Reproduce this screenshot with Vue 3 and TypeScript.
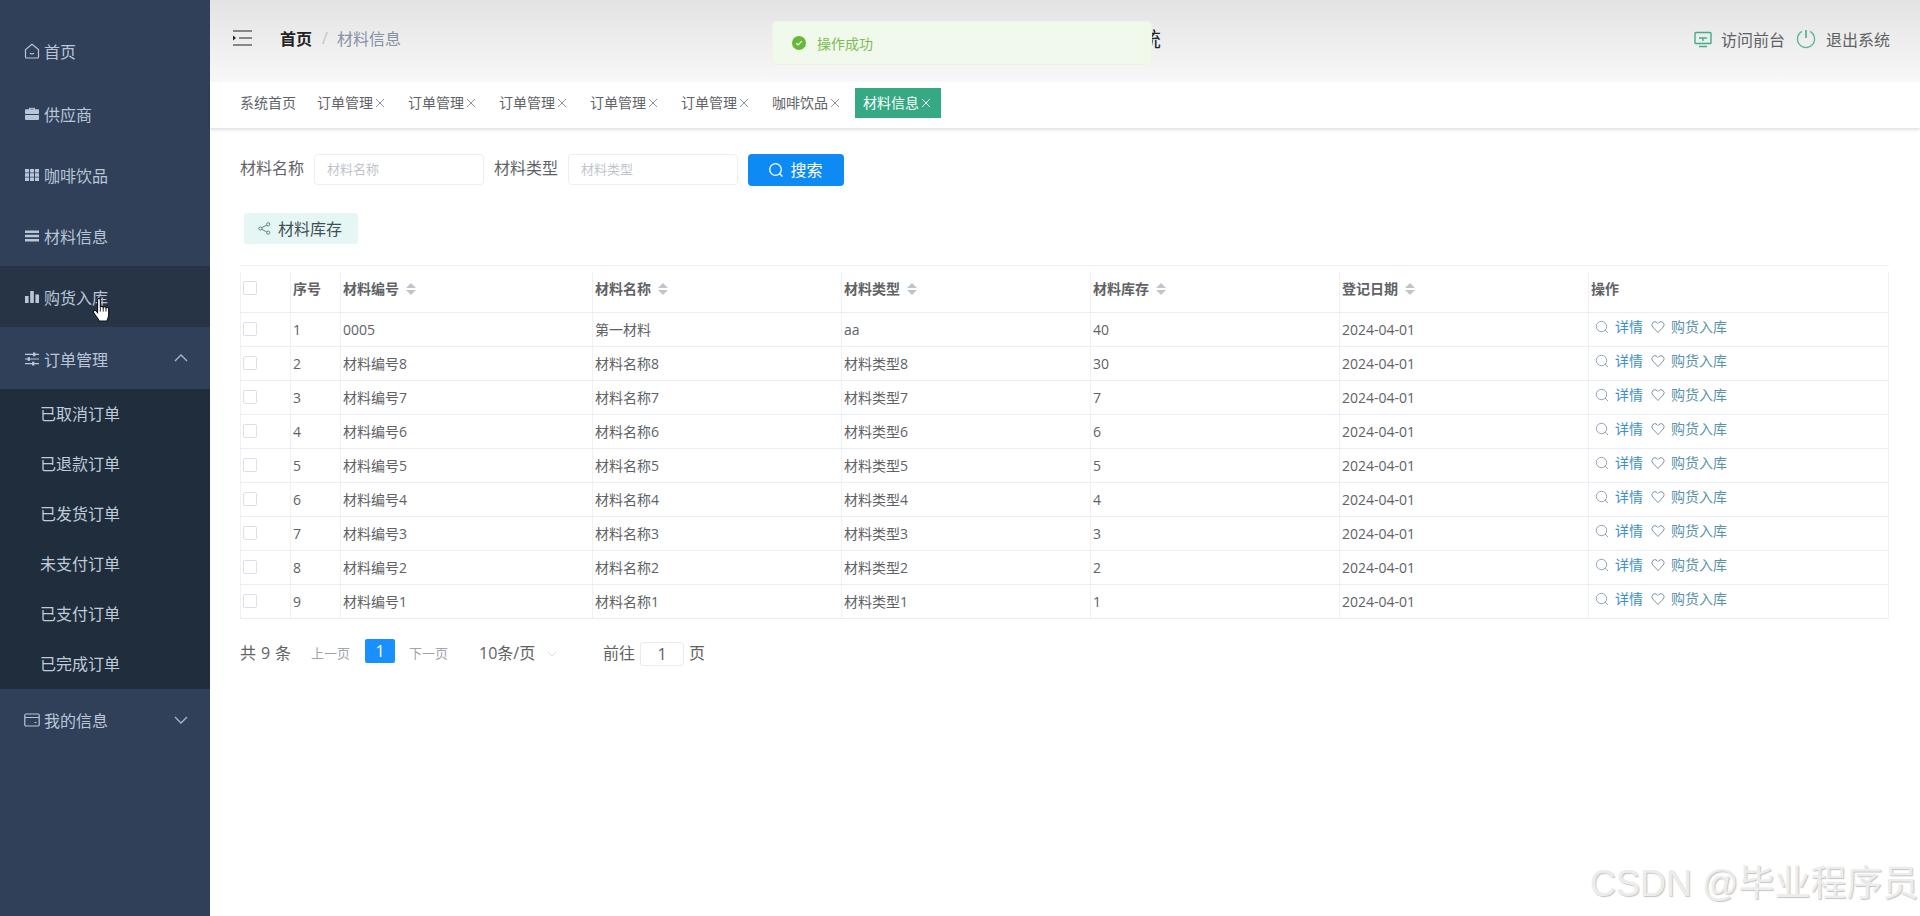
<script setup lang="ts">
interface MenuItem { label: string; icon: string; hover?: boolean; open?: boolean; closed?: boolean }
const menu: MenuItem[] = [
  { label: '首页', icon: 'home' },
  { label: '供应商', icon: 'case' },
  { label: '咖啡饮品', icon: 'grid' },
  { label: '材料信息', icon: 'bars' },
  { label: '购货入库', icon: 'chart', hover: true },
  { label: '订单管理', icon: 'sliders', open: true },
]
const subMenu = ['已取消订单', '已退款订单', '已发货订单', '未支付订单', '已支付订单', '已完成订单']
const tags = ['订单管理', '订单管理', '订单管理', '订单管理', '订单管理', '咖啡饮品']
const columns = ['材料编号', '材料名称', '材料类型', '材料库存', '登记日期']
const rows = [
  ['1', '0005', '第一材料', 'aa', '40'],
  ['2', '材料编号8', '材料名称8', '材料类型8', '30'],
  ['3', '材料编号7', '材料名称7', '材料类型7', '7'],
  ['4', '材料编号6', '材料名称6', '材料类型6', '6'],
  ['5', '材料编号5', '材料名称5', '材料类型5', '5'],
  ['6', '材料编号4', '材料名称4', '材料类型4', '4'],
  ['7', '材料编号3', '材料名称3', '材料类型3', '3'],
  ['8', '材料编号2', '材料名称2', '材料类型2', '2'],
  ['9', '材料编号1', '材料名称1', '材料类型1', '1'],
]
</script>

<template>
  <div class="shell">
    <aside class="side">
      <nav class="menu">
        <div v-for="m in menu" :key="m.label" class="item" :class="{ hover: m.hover, open: m.open }">
          <svg class="mi" viewBox="0 0 16 16">
            <g v-if="m.icon === 'home'" fill="none" stroke="currentColor" stroke-width="1.2">
              <path d="M1.5 6.6 8 1.2l6.5 5.4v7.4a1 1 0 0 1-1 1h-11a1 1 0 0 1-1-1z" />
              <path d="M6 10.2q2 1.4 4 0" />
            </g>
            <g v-else-if="m.icon === 'case'" fill="currentColor">
              <path d="M5 3.2V1.800h6v1.400h3a1 1 0 0 1 1 1V8H1V4.200a1 1 0 0 1 1-1zm1.200 0h3.600v-.5H6.200z" fill-rule="evenodd" />
              <path d="M1 9h14v4a1 1 0 0 1-1 1H2a1 1 0 0 1-1-1z" />
            </g>
            <g v-else-if="m.icon === 'grid'" fill="currentColor">
              <path d="M1 2h4v3.400H1zM6 2h4v3.400H6zM11 2h4v3.400h-4zM1 6.300h4v3.400H1zM6 6.300h4v3.400H6zM11 6.300h4v3.400h-4zM1 10.600h4V14H1zM6 10.600h4V14H6zM11 10.600h4V14h-4z" />
            </g>
            <g v-else-if="m.icon === 'bars'" fill="currentColor">
              <path d="M1 2.500h14v2.600H1zM1 6.700h14v2.600H1zM1 10.900h14v2.600H1z" />
            </g>
            <g v-else-if="m.icon === 'chart'" fill="currentColor">
              <path d="M1 7h3.600v7H1zM6.200 2h3.600v12H6.200zM11.400 5.500H15V14h-3.600z" />
            </g>
            <g v-else fill="currentColor">
              <path d="M1 2.800h14v1.200H1zM1 7.400h14v1.200H1zM1 12h14v1.200H1z" />
              <path d="M9 1.600h2.400v3.600H9zM3.600 6.200H6v3.600H3.600zM8 10.800h2.400v3.600H8z" />
            </g>
          </svg>
          <span>{{ m.label }}</span>
          <svg v-if="m.open" class="arrow" viewBox="0 0 14 8"><path d="M1 7l6-6 6 6" /></svg>
        </div>
        <div class="sub">
          <div v-for="s in subMenu" :key="s" class="sub-item">{{ s }}</div>
        </div>
        <div class="item">
          <svg class="mi" viewBox="0 0 16 16" fill="none" stroke="currentColor" stroke-width="1.2">
            <rect x="0.800" y="2" width="14.400" height="12" rx="1.200" />
            <path d="M1 5.500h14M10.500 10.500h2" />
          </svg>
          <span>我的信息</span>
          <svg class="arrow" viewBox="0 0 14 8"><path d="M1 1l6 6 6-6" /></svg>
        </div>
      </nav>
    </aside>

    <div class="main">
      <header class="head">
        <svg class="fold" viewBox="0 0 20 16">
          <path d="M1 1h19M7 8h13M1 15h19" stroke="#222" stroke-width="1.200" fill="none" />
          <path d="M1 5.500 4 8l-3 2.500z" fill="#222" />
        </svg>
        <span class="crumb-a">首页</span>
        <span class="crumb-s">/</span>
        <span class="crumb-b">材料信息</span>
        <span class="title">咖啡管理系统</span>
        <div class="head-right">
          <svg class="hi" viewBox="0 0 18 18" fill="none" stroke="#3fae8c" stroke-width="1.400">
            <rect x="1" y="1.500" width="16" height="11" rx="0.800" />
            <path d="M5 7h8M9 7v3M5 15.500h8" />
          </svg>
          <span class="link">访问前台</span>
          <svg class="hi pw" viewBox="0 0 20 20" fill="none" stroke="#5fb79b" stroke-width="1.300">
            <path d="M6 2.400a8.600 8.600 0 1 0 8 0" />
            <path d="M10 1v8" stroke-width="1.600" stroke="#3fae8c" />
          </svg>
          <span class="link">退出系统</span>
        </div>
      </header>

      <div class="tags">
        <span class="tag">系统首页</span>
        <span v-for="(t, i) in tags" :key="i" class="tag">{{ t }}<svg class="x" viewBox="0 0 12 12"><path d="M2 2l8 8M10 2l-8 8" /></svg></span>
        <span class="tag on">材料信息<svg class="x" viewBox="0 0 12 12"><path d="M2 2l8 8M10 2l-8 8" /></svg></span>
      </div>

      <section class="content">
        <div class="search">
          <label>材料名称</label>
          <div class="inp">材料名称</div>
          <label>材料类型</label>
          <div class="inp">材料类型</div>
          <button class="btn" type="button">
            <svg viewBox="0 0 16 16" fill="none" stroke="#fff" stroke-width="1.300">
              <circle cx="7.500" cy="7.500" r="5.800" /><path d="M11.700 11.700 14.500 14.500" />
            </svg>
            <span>搜索</span>
          </button>
        </div>

        <button class="stock" type="button">
          <svg viewBox="0 0 14 14" fill="none" stroke="#4f7f80" stroke-width="1">
            <circle cx="2.500" cy="7" r="1.700" /><circle cx="11" cy="2.500" r="1.700" /><circle cx="11" cy="11.500" r="1.700" />
            <path d="M4 6.200 9.500 3.300M4 7.800l5.500 2.900" />
          </svg>
          <span>材料库存</span>
        </button>

        <div class="table-wrap">
          <table>
            <colgroup>
              <col style="width:50px" /><col style="width:50px" /><col style="width:252px" /><col style="width:249px" />
              <col style="width:249px" /><col style="width:249px" /><col style="width:249px" /><col />
            </colgroup>
            <thead>
              <tr>
                <th><i class="cb"></i></th>
                <th>序号</th>
                <th v-for="c in columns" :key="c">{{ c }}<span class="sort"><i class="up"></i><i class="dn"></i></span></th>
                <th>操作</th>
              </tr>
            </thead>
            <tbody>
              <tr v-for="r in rows" :key="r[0]">
                <td><i class="cb"></i></td>
                <td v-for="(v, i) in r" :key="i">{{ v }}</td>
                <td>2024-04-01</td>
                <td class="ops">
                  <svg viewBox="0 0 14 14" fill="none" stroke="#8fa3c0" stroke-width="1">
                    <circle cx="6.500" cy="6.500" r="5.200" /><path d="M10 10l3 3" />
                  </svg>
                  <span class="detail">详情</span>
                  <svg class="heart" viewBox="0 0 14 14" fill="none" stroke="#7f93a8" stroke-width="1">
                    <path d="M7 12.500 1.800 7a3.200 3.200 0 0 1 0-4.400 3 3 0 0 1 4.300 0L7 3.500l.9-.9a3 3 0 0 1 4.300 0 3.200 3.200 0 0 1 0 4.400z" />
                  </svg>
                  <span class="buy">购货入库</span>
                </td>
              </tr>
            </tbody>
          </table>
        </div>

        <div class="pager">
          <span class="total txt">共 9 条</span>
          <span class="pg txt">上一页</span>
          <span class="cur">1</span>
          <span class="pg txt">下一页</span>
          <span class="size txt">10条/页</span>
          <svg class="size-arrow" viewBox="0 0 12 8"><path d="M2 2l4 4 4-4" /></svg>
          <span class="goto txt">前往</span>
          <span class="goto-inp">1</span>
          <span class="txt">页</span>
        </div>
      </section>
    </div>

    <div class="toast">
      <svg viewBox="0 0 14 14">
        <circle cx="7" cy="7" r="7" fill="#67b83a" />
        <path d="M4.200 7.200 6.200 9l3.600-3.800" fill="none" stroke="#fff" stroke-width="1.200" />
      </svg>
      <span>操作成功</span>
    </div>

    <svg class="cursor" viewBox="0 0 18 24">
      <path d="M5 2.200c0-1.500 2.500-1.500 2.500 0V9c.4-1 2.300-1 2.600.2.500-.9 2.200-.8 2.500.4.600-.7 2.400-.4 2.400 1V16c0 2.500-1.200 3.500-1.500 5.500H6.500C6 19.500 1.500 14.800 1.300 13.500c-.3-1.300 1.300-2.200 2.400-1.200L5 13.800z" fill="#fff" stroke="#111" stroke-width="1" />
      <path d="M7.500 9v4M10.100 9.200V13M12.600 9.600V13" stroke="#111" stroke-width="0.800" fill="none" />
    </svg>

    <div class="mark">CSDN @毕业程序员</div>
  </div>
</template>

<style>
html, body { margin: 0; background: #fff; }
</style>

<style scoped>
.shell {
  position: relative;
  display: flex;
  height: 100vh;
  overflow: hidden;
  font-family: "Open Sans", "Noto Sans CJK SC", sans-serif;
  color: #606266;
}
.side { width: 210px; flex: none; background: #304058; padding-top: 20px; box-sizing: border-box; }
.item {
  height: 61px; display: flex; align-items: center; padding-left: 24px;
  color: #b9c6d8; font-size: 16px; position: relative; box-sizing: border-box;
}
.item:first-child { height: 63px; padding-bottom: 2px; }
.item.open { height: 62px; padding-top: 2px; }
.item.hover { background: #263445; }
.item span { margin-left: 4px; }
.mi { width: 16px; height: 16px; flex: none; }
.arrow {
  position: absolute; right: 22px; top: 27px; width: 14px; height: 8px;
  fill: none; stroke: #a9b7c9; stroke-width: 1.300;
}
.sub { background: #1f2d3d; }
.sub-item { height: 50px; line-height: 50px; padding-left: 40px; font-size: 16px; color: #bfcbd9; }

.main { flex: 1; min-width: 0; display: flex; flex-direction: column; }
.head {
  position: relative; height: 82px; flex: none; box-sizing: border-box;
  background: linear-gradient(#e3e3e3, #f8f8f8);
  display: flex; align-items: center; padding: 0 30px 6px 22px;
}
.fold { width: 20px; height: 16px; flex: none; margin-right: 28px; }
.crumb-a { font-size: 16px; font-weight: 700; color: #222; }
.crumb-s { margin: 0 9px 0 10px; color: #c0c4cc; font-size: 16px; }
.crumb-b { font-size: 16px; color: #8492a6; }
.title { position: absolute; left: 741px; top: 28px; width: 210px; text-align: right; font-size: 20px; line-height: 24px; color: #222; white-space: nowrap; }
.head-right { margin-left: auto; display: flex; align-items: center; padding-top: 2px; }
.hi { width: 18px; height: 18px; margin-right: 9px; margin-top: 2px; }
.pw { width: 20px; height: 20px; margin: 0 10px 0 11px; }
.link { font-size: 16px; color: #606266; }

.tags {
  height: 46px; flex: none; box-sizing: border-box; background: #fff;
  padding: 6px 0 0 22px; display: flex; gap: 5px; align-items: flex-start;
  box-shadow: 0 2px 3px rgba(0, 0, 0, 0.12); position: relative;
}
.tag { height: 30px; line-height: 30px; padding: 0 8px; font-size: 14px; color: #606266; display: flex; align-items: center; }
.tag.on { background: #35a983; color: #fff; }
.x { width: 14px; height: 12px; fill: none; stroke: #909399; stroke-width: 1; }
.on .x { stroke: #fff; }

.content { padding: 26px 30px 0; }
.search { display: flex; align-items: flex-start; height: 32px; }
.search label { font-size: 16px; line-height: 29px; color: #606266; width: 64px; margin-right: 10px; }
.inp {
  width: 170px; height: 31px; line-height: 29px; box-sizing: border-box; margin-right: 10px;
  border: 1px solid #eceef2; border-radius: 4px; padding-left: 12px; font-size: 13px; color: #c0c4cc;
}
.btn {
  width: 96px; height: 32px; border: 0; border-radius: 4px; background: #0e8af5; color: #fff;
  font: inherit; font-size: 16px; display: flex; align-items: center; justify-content: center; gap: 6px; padding: 0 1px 0 0;
}
.btn span { margin-top: -2px; }
.btn svg { width: 16px; height: 16px; }
.stock {
  margin: 27px 0 0 4px; width: 114px; height: 31px; border: 0; border-radius: 3px; background: #e6f6f4;
  color: #3f4f55; font: inherit; font-size: 16px; display: flex; align-items: center; gap: 7px; padding: 0 0 0 14px;
}
.stock span { margin-top: -2px; }
.stock svg { width: 13px; height: 13px; }

.table-wrap { margin-top: 21px; border-top: 1px solid #eef0f4; padding-top: 6px; width: 1649px; }
table { border-collapse: collapse; table-layout: fixed; width: 1649px; }
th, td {
  padding: 0 0 0 2px; text-align: left; border-left: 1px solid #f0f1f4; border-bottom: 1px solid #ebeef2;
  white-space: nowrap; overflow: hidden; box-sizing: border-box;
}
th:first-child, td:first-child { padding-left: 2px; }
th:last-child, td:last-child { border-right: 1px solid #f0f1f4; }
thead tr { height: 40px; }
tbody tr { height: 34px; }
th { font-size: 14px; font-weight: 700; color: #606266; padding-bottom: 7px; }
td { font-size: 14px; color: #606266; }
.cb { display: block; width: 14px; height: 14px; box-sizing: border-box; border: 1px solid #dcdfe6; border-radius: 2px; }
.sort { display: inline-flex; flex-direction: column; gap: 2px; margin-left: 7px; vertical-align: 4px; transform: translateY(-2px); }
.sort i { display: block; width: 0; height: 0; border-left: 5px solid transparent; border-right: 5px solid transparent; }
.sort .up { border-bottom: 5px solid #c0c4cc; }
.sort .dn { border-top: 5px solid #c0c4cc; }
.ops { padding: 0 0 7px 6px; }
.ops svg { width: 14px; height: 14px; vertical-align: -2px; margin-right: 6px; }
.ops .heart { margin-left: 8px; }
.detail { color: #3d8fd0; }
.buy { color: #5a93a8; }

.pager { display: flex; align-items: flex-start; height: 24px; margin-top: 20px; font-size: 16px; }
.txt { line-height: 24px; padding-top: 2px; }
.total { width: 71px; letter-spacing: 0.4px; }
.pg { font-size: 13px; color: #a0a5ad; width: 39px; }
.cur {
  width: 30px; height: 24px; line-height: 24px; text-align: center; margin: 0 14px 0 15px; border-radius: 2px;
  background: #1890ff; color: #fff; font-size: 16px;
}
.size { margin-left: 31px; width: 54px; white-space: nowrap; }
.size-arrow { width: 12px; height: 8px; margin: 11px 0 0 13px; fill: none; stroke: #d5d8de; stroke-width: 1; }
.goto { margin-left: 45px; }
.goto-inp {
  width: 44px; height: 24px; line-height: 22px; box-sizing: border-box; margin: 3px 5px 0; text-align: center;
  border: 1px solid #e9ebef; border-radius: 3px;
}
.toast {
  position: absolute; left: 772px; top: 21px; width: 380px; height: 44px; box-sizing: border-box;
  background: #f0f9eb; border: 1px solid #eaf5e2; border-radius: 4px;
  display: flex; align-items: center; padding-left: 19px; gap: 11px; font-size: 14px; color: #7dbb55;
}
.toast svg { width: 14px; height: 14px; }
.cursor { position: absolute; left: 92px; top: 297px; width: 20px; height: 27px; }
.mark {
  position: absolute; left: 1590px; top: 863px; font-size: 36px; line-height: 42px; white-space: nowrap;
  font-family: "Liberation Sans", "Noto Sans CJK SC", sans-serif;
  color: #ececec; text-shadow: 1px 1px 1px #c4c4c4;
}
</style>
